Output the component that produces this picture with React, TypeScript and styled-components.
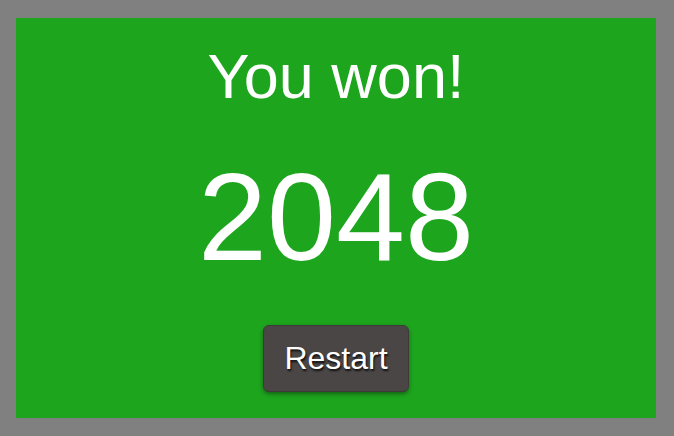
import React, { FC } from "react";
import styled, { createGlobalStyle } from "styled-components";

const GlobalStyle = createGlobalStyle`
  html, body {
    margin: 0;
    padding: 0;
    background: #808080;
  }
  body {
    font-family: "Liberation Sans", Arial, Helvetica, sans-serif;
    padding: 18px 18px 18px 16px;
  }
`;

const Panel = styled.div`
  width: 640px;
  height: 400px;
  box-sizing: border-box;
  background: #1ea51e;
  color: #fff;
  display: flex;
  flex-direction: column;
  align-items: center;
  padding-top: 22px;
`;

const Title = styled.div`
  font-size: 63px;
  line-height: normal;
`;

const Score = styled.div`
  font-size: 124px;
  line-height: normal;
  margin-top: 34px;
`;

const RestartButton = styled.button`
  margin-top: 37px;
  font-family: inherit;
  font-size: 32px;
  line-height: normal;
  color: #fff;
  background: #4b4646;
  border: 1px solid #3e3a3a;
  border-radius: 6px;
  padding: 14px 20px;
  text-shadow: 1px 2px 2px rgba(0, 0, 0, 0.8);
  box-shadow: 0 2px 4px rgba(0, 0, 0, 0.4);
  cursor: pointer;
`;

const App: FC = () => {
  return (
    <>
      <GlobalStyle />
      <Panel>
        <Title>You won!</Title>
        <Score>2048</Score>
        <RestartButton type="button">Restart</RestartButton>
      </Panel>
    </>
  );
};

export default App;
